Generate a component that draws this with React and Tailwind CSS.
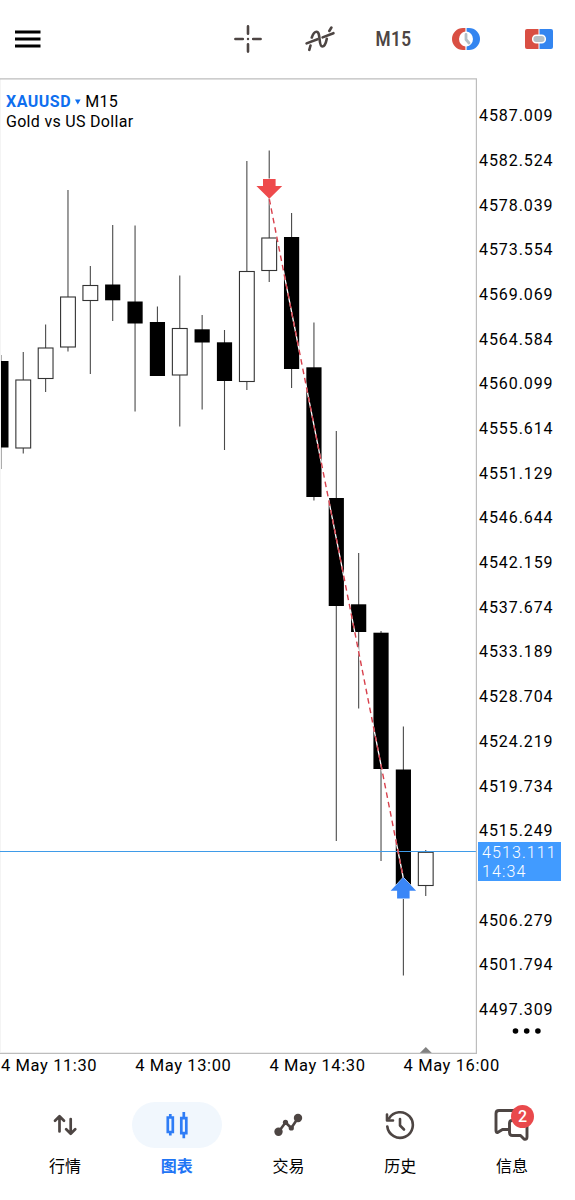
// [high, top, bottom, low, filled]
const CANDLES = [
  [355, 361, 447.5, 469, true],
  [352, 380, 448, 453.5, false],
  [324.5, 348, 378.5, 392, false],
  [190, 297, 347, 351.5, false],
  [266, 285.5, 300.5, 374, false],
  [225, 284.5, 300.3, 321, true],
  [225.5, 301.5, 323.5, 411.5, true],
  [306.5, 322, 376, 376, true],
  [275.5, 328.5, 375, 426.5, false],
  [315, 329.3, 342.5, 409.5, true],
  [330, 342.3, 381, 450, true],
  [161, 271.5, 381.5, 390, false],
  [150.5, 238, 270.5, 282, false],
  [213, 237, 369, 388, true],
  [322.5, 367.3, 497, 500.5, true],
  [431, 498, 606, 841, true],
  [553, 604.3, 632, 708.5, true],
  [631, 632.7, 769, 861, true],
  [726.5, 769.5, 885, 975.5, true],
  [850, 852.3, 885.5, 896, false],
];

const PRICES = [
  '4587.009', '4582.524', '4578.039', '4573.554', '4569.069', '4564.584', '4560.099',
  '4555.614', '4551.129', '4546.644', '4542.159', '4537.674', '4533.189', '4528.704',
  '4524.219', '4519.734', '4515.249', '', '4506.279', '4501.794', '4497.309',
];

const TIMES = ['4 May 11:30', '4 May 13:00', '4 May 14:30', '4 May 16:00'];

function Candle({ index, data }) {
  const [high, top, bottom, low, filled] = data;
  const x = 0.9 + index * 22.36;
  return (
    <g>
      <line x1={x} x2={x} y1={high} y2={low} stroke="#4a4a4a" strokeWidth="1.1" />
      {filled ? (
        <rect x={x - 7.6} y={top} width="15.2" height={bottom - top} fill="#000" />
      ) : (
        <rect x={x - 7.4} y={top} width="14.8" height={bottom - top} fill="#fff" stroke="#333" strokeWidth="1.1" />
      )}
    </g>
  );
}

function Chart() {
  return (
    <svg width="477" height="976" viewBox="0 78 477 976" className="block">
      {CANDLES.map((c, i) => (
        <Candle key={i} index={i} data={c} />
      ))}
      <rect x="0" y="79" width="1" height="973" fill="#f4f4f4" />
      <rect x="0" y="851" width="477" height="1" fill="#3f9be8" />
      {/* trade line, entry to exit */}
      <line x1="269.3" y1="199" x2="403.3" y2="878" stroke="#fff" strokeWidth="1.3" />
      <line x1="269.3" y1="199" x2="403.3" y2="878" stroke="#d8404c" strokeWidth="1.4" strokeDasharray="5.6 4" />
      <path d="M263 179h12.6v7h6.6l-12.9 12.7L256.4 186h6.6z" fill="#ee4a4c" stroke="#fff" strokeWidth="1" paintOrder="stroke" />
      <path d="M403.3 877.3l12.8 13.4h-6.5v7.8h-12.5v-7.8h-6.5z" fill="#3a86f7" stroke="#fff" strokeWidth="1" paintOrder="stroke" />
      <path d="M425.8 1047l6 6h-12z" fill="#808080" />
      <path d="M0 78.8h476.4v974.5H0" fill="none" stroke="#bdbdbd" strokeWidth="1.2" />
      <path d="M.5 1053v3M134.8 1053v3M269 1053v3M403.3 1053v3" stroke="#bdbdbd" />
    </svg>
  );
}

function MenuIcon() {
  return (
    <svg width="26" height="18" viewBox="0 0 26 18">
      <path d="M0 2h25.5M0 9h25.5M0 16h25.5" stroke="#000" strokeWidth="2.8" />
    </svg>
  );
}

function CrosshairIcon() {
  return (
    <svg width="28" height="28" viewBox="0 0 28 28" stroke="#4d4543" strokeWidth="2.6" strokeLinecap="round">
      <path d="M14 1.4v7.4M14 19.2v7.4M1.4 14h7.4M19.2 14h7.4" />
      <path d="M14 14h.01" strokeWidth="2.4" />
    </svg>
  );
}

function IndicatorIcon() {
  return (
    <svg width="30" height="26" viewBox="0 0 30 26" fill="none" stroke="#4d4543" strokeWidth="2.6" strokeLinecap="round">
      <path d="M1.6 17.4L12.5 13.2M17.6 11.4L28.4 7.2" />
      <path d="M4.3 23.8L5.5 19.5M6.8 11.5C8 7.8 9.5 5.8 11.5 5.8C16 5.8 13.2 20.5 17.3 20.5C20 20.5 21 17 21.8 12.8M24.3 5L26.4 1.5" />
    </svg>
  );
}

function TimeIcon() {
  return (
    <svg width="30" height="24" viewBox="0 0 30 24" fill="none">
      <path d="M14.4 1H12A11 11 0 0 0 12 23H14.4V19.5A7.6 7.6 0 0 1 14.4 4.5Z" fill="#d94f43" />
      <path d="M15.6 1H18A11 11 0 0 1 18 23H15.6V19.5A7.6 7.6 0 0 0 15.6 4.5Z" fill="#3385f0" />
      <path d="M15 7.5V12.5l3 3.5" stroke="#b4bfc6" strokeWidth="2.8" strokeLinecap="round" strokeLinejoin="round" />
    </svg>
  );
}

function OneClickIcon() {
  return (
    <svg width="28" height="20" viewBox="0 0 28 20">
      <path d="M2 0H13.5V20H2A2 2 0 0 1 0 18V2A2 2 0 0 1 2 0Z" fill="#d94f43" />
      <path d="M14.5 0H26A2 2 0 0 1 28 2V18A2 2 0 0 1 26 20H14.5Z" fill="#3385f0" />
      <rect x="7.7" y="6.2" width="12.6" height="7.6" rx="3.5" fill="#b4bfc6" stroke="#fff" strokeWidth="1.5" />
    </svg>
  );
}

function QuotesIcon() {
  return (
    <svg width="24" height="22" viewBox="0 0 24 22" fill="none" stroke="#4d4543" strokeWidth="2.7" strokeLinecap="round" strokeLinejoin="round">
      <path d="M6.5 17.5V3M2 6.8L6.5 2.3L11 6.8" />
      <path d="M17.7 5v14.3M13.2 15.3l4.5 4.4l4.5-4.4" />
    </svg>
  );
}

function ChartIcon() {
  return (
    <svg width="24" height="28" viewBox="0 0 24 28" fill="none" stroke="#2f7df6" strokeWidth="2.7">
      <path d="M2.8 6.5h5v14.5h-5zM5.3 3v3.5M5.3 21v3.5M16.3 7.2h5v15h-5zM18.8 1v6.2M18.8 22.2v5" />
    </svg>
  );
}

function TradeIcon() {
  return (
    <svg width="30" height="24" viewBox="0 0 30 24" fill="#4d4543">
      <path d="M5.5 19L12.5 9.5L18.3 15L25 5" fill="none" stroke="#4d4543" strokeWidth="2.6" strokeLinejoin="round" />
      <circle cx="5.5" cy="18.8" r="4.2" />
      <circle cx="25" cy="5" r="4.2" />
      <circle cx="12.5" cy="9.3" r="2.6" />
      <circle cx="18.3" cy="15" r="2.6" />
    </svg>
  );
}

function HistoryIcon() {
  return (
    <svg width="30" height="30" viewBox="0 0 30 30" fill="none" stroke="#4d4543" strokeWidth="2.6" strokeLinecap="round" strokeLinejoin="round">
      <path d="M2.3 16.5A12.8 12.8 0 1 0 4 8.5" />
      <path d="M2 4.5V10.5H8" />
      <path d="M15 9v6.5l4 4" />
    </svg>
  );
}

function MessagesIcon() {
  return (
    <svg width="36" height="34" viewBox="0 0 36 34" fill="none" stroke="#4d4543" strokeWidth="2.9" strokeLinejoin="round" strokeLinecap="round">
      <path d="M14 21.5H8.5L4 24.3C2.5 24.8 2 24 2 22.5V5.5Q2 2.5 5 2.5H20" />
      <path d="M18 12.5Q15.5 12.5 15.5 15V24.5Q15.5 27.5 18.5 27.5H26.5L30 31Q33 32 33 29V17" />
    </svg>
  );
}

const TABS = [
  { label: '行情', icon: <QuotesIcon /> },
  { label: '图表', icon: <ChartIcon />, active: true },
  { label: '交易', icon: <TradeIcon /> },
  { label: '历史', icon: <HistoryIcon /> },
  { label: '信息', icon: <MessagesIcon />, badge: 2 },
];

export default function App() {
  return (
    <div className="w-[575px] h-[1200px] flex flex-col overflow-hidden bg-white text-black font-['Roboto','Noto_Sans_CJK_SC',sans-serif]">
      <header className="h-[78px] shrink-0 flex items-center pl-[15px] pr-[22px]">
        <MenuIcon />
        <div className="ml-auto flex items-center">
          <CrosshairIcon />
          <div className="ml-[43px]"><IndicatorIcon /></div>
          <div className="ml-[40px] w-[36px] flex justify-center">
            <span className="text-[20.5px] font-semibold text-[#4d4543] origin-center scale-x-[.84] tracking-[.5px]">M15</span>
          </div>
          <div className="ml-[40px]"><TimeIcon /></div>
          <div className="ml-[44px]"><OneClickIcon /></div>
        </div>
      </header>

      <main className="h-[976px] shrink-0 flex">
        <div className="relative w-[477px] shrink-0">
          <Chart />
          <div className="absolute left-[6px] top-[14px] text-[16px] leading-[20px] tracking-[.3px]">
            <div className="flex items-center">
              <span className="font-bold text-[#0f6fef] tracking-[.5px]">XAUUSD</span>
              <svg width="6" height="6" viewBox="0 0 6 6" className="ml-[4px] mr-[4px]">
                <path d="M0 .5h5.6L2.8 5.5z" fill="#0f6fef" />
              </svg>
              <span>M15</span>
            </div>
            <div>Gold vs US Dollar</div>
          </div>
        </div>
        <div className="relative flex-1 pt-[15.2px] pl-[2px]">
          {PRICES.map((p, i) => (
            <div key={i} className="h-[44.69px] text-[16px] leading-[45px] tracking-[.92px]">{p}</div>
          ))}
          <div className="absolute left-[1px] top-[764px] w-[83px] h-[39px] bg-[#419bff] pl-[4px] pt-[1px] text-[16px] leading-[19px] font-light tracking-[1.1px] text-white">
            <div>4513.111</div>
            <div>14:34</div>
          </div>
          <svg width="30" height="6" viewBox="0 0 30 6" className="absolute left-[35px] top-[950px]">
            <circle cx="3.5" cy="3" r="2.8" />
            <circle cx="14.7" cy="3" r="2.8" />
            <circle cx="25.9" cy="3" r="2.8" />
          </svg>
        </div>
      </main>

      <div className="h-[40px] shrink-0 flex pl-[1px]">
        {TIMES.map((t) => (
          <div key={t} className="w-[134.2px] shrink-0 whitespace-nowrap text-[16.5px] leading-[23px] tracking-[.6px]">{t}</div>
        ))}
      </div>

      <nav className="flex-1 grid grid-cols-5 pl-[9px] pr-[7px] pt-[8px]">
        {TABS.map((tab) => (
          <div key={tab.label} className="flex flex-col items-center">
            <div className={`relative w-[90px] h-[46px] rounded-full flex items-center justify-center ${tab.active ? 'bg-[#f1f7fd]' : ''}`}>
              {tab.icon}
              {tab.badge && (
                <span className="absolute left-[44px] top-[3px] w-[23px] h-[23px] rounded-full bg-[#e9494c] text-white text-[16px] font-medium flex items-center justify-center">
                  {tab.badge}
                </span>
              )}
            </div>
            <span className={`mt-[8px] text-[16px] leading-[22px] ${tab.active ? 'font-bold text-[#1f75f5]' : ''}`}>{tab.label}</span>
          </div>
        ))}
      </nav>
    </div>
  );
}
